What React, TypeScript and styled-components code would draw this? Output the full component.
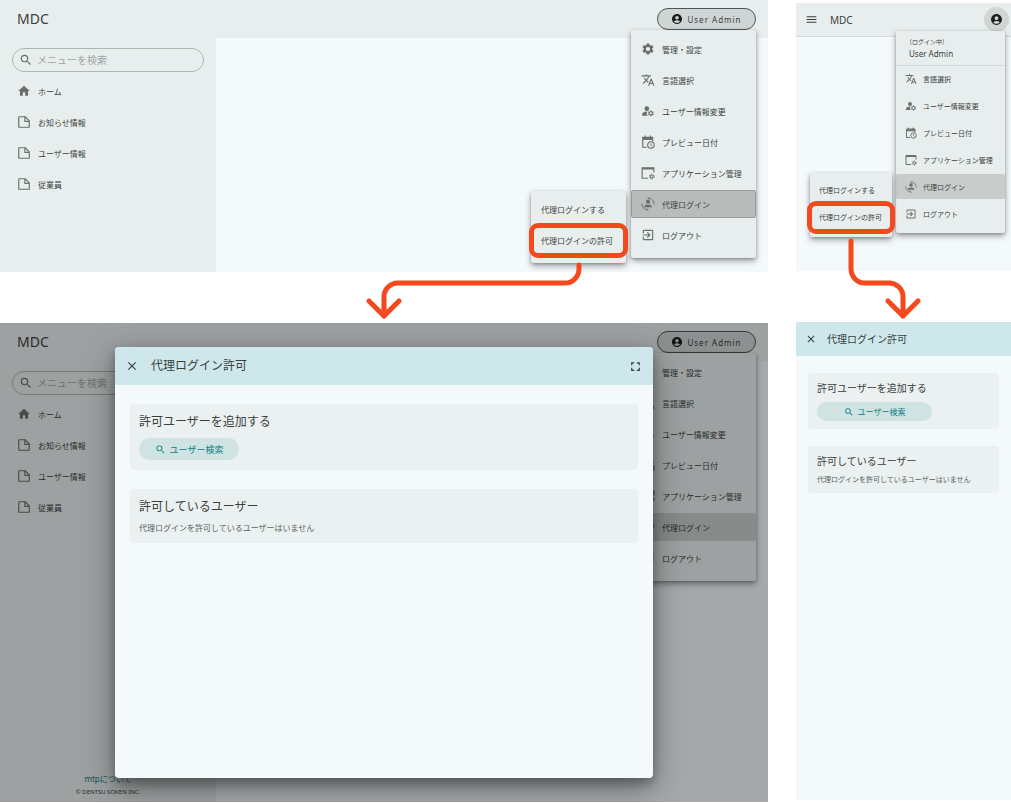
import React from "react";
import styled, { createGlobalStyle, css } from "styled-components";
import {
  MdSearch,
  MdHome,
  MdAccountCircle,
  MdSettings,
  MdTranslate,
  MdManageAccounts,
  MdExitToApp,
  MdMenu,
  MdClose,
  MdFullscreen,
} from "react-icons/md";

const surface = "#e8eeed";
const canvas = "#f4f9fc";
const ink = "#3a3f3e";
const iconInk = "#6a706f";
const accent = "#f4491f";

const GlobalStyle = createGlobalStyle`
  * { box-sizing: border-box; }
  body {
    margin: 0;
    background: #fff;
    color: ${ink};
    font-family: "Noto Sans", "Noto Sans CJK JP", sans-serif;
    font-size: 8px;
  }
  button, input { font: inherit; color: inherit; }
  svg { display: block; flex: none; }
`;

const Page = styled.main`
  display: grid;
  grid-template-columns: minmax(0, 1fr) 215px;
  column-gap: 28px;
  align-items: start;
`;

const Column = styled.div<{ $compact?: boolean }>`
  position: relative;
  display: flex;
  flex-direction: column;
  gap: 51px;
  padding-top: ${(p) => (p.$compact ? 3 : 0)}px;
`;

/* Desktop window */

const Desktop = styled.section<{ $tall?: boolean }>`
  position: relative;
  display: flex;
  flex-direction: column;
  min-height: ${(p) => (p.$tall ? 479 : 272)}px;
  background: ${canvas};
`;

const TopBar = styled.header`
  display: flex;
  align-items: center;
  justify-content: space-between;
  height: 38px;
  padding: 0 12px 0 17px;
  background: ${surface};
`;

const Brand = styled.h1`
  margin: 0;
  font-size: 14px;
  line-height: 20px;
  font-weight: 400;
`;

const UserButton = styled.button`
  display: flex;
  align-items: center;
  justify-content: center;
  gap: 4px;
  width: 99px;
  height: 22px;
  padding: 0;
  border: 1px solid #4f5554;
  border-radius: 11px;
  background: #cfd5d4;
  letter-spacing: 1px;
  svg { color: #1b1f1e; }
`;

const DesktopBody = styled.div`
  flex: 1;
  display: flex;
`;

const Sidebar = styled.aside`
  display: flex;
  flex-direction: column;
  width: 216px;
  padding: 10px 12px 4px;
  background: ${surface};
`;

const SearchField = styled.label`
  display: flex;
  align-items: center;
  gap: 4px;
  height: 24px;
  padding: 0 6px;
  border: 1px solid #aeb5b3;
  border-radius: 12px;
  color: ${iconInk};
`;

const SearchInput = styled.input`
  flex: 1;
  min-width: 0;
  padding: 0;
  border: 0;
  outline: 0;
  background: transparent;
  font-size: 10px;
  line-height: 16px;
  &::placeholder {
    color: #a0a6a5;
    opacity: 1;
  }
`;

const NavList = styled.nav`
  display: flex;
  flex-direction: column;
  gap: 3px;
  padding-top: 5px;
`;

const NavLink = styled.a`
  display: flex;
  align-items: center;
  gap: 7px;
  height: 28px;
  padding-left: 5px;
  color: ${ink};
  text-decoration: none;
  svg { color: ${iconInk}; }
`;

const SideFooter = styled.footer`
  display: flex;
  flex-direction: column;
  align-items: center;
  gap: 1px;
  margin-top: auto;
  font-size: 6px;
  line-height: 12px;
`;

const FooterLink = styled.a`
  color: #0b7a7d;
  font-size: 8px;
  text-decoration: none;
`;

/* Menus */

const floating = css`
  position: absolute;
  z-index: 2;
  border-radius: 2px;
  background: ${surface};
  box-shadow: 0 3px 6px rgba(0, 0, 0, 0.35), 0 1px 3px rgba(0, 0, 0, 0.2);
`;

const UserMenu = styled.div<{ $compact?: boolean }>`
  ${floating}
  top: ${(p) => (p.$compact ? 28 : 30)}px;
  right: ${(p) => (p.$compact ? 6 : 12)}px;
  width: ${(p) => (p.$compact ? 109 : 125)}px;
  padding: ${(p) => (p.$compact ? "0 0 7px" : "5px 0 9px")};
`;

const SubMenu = styled.div<{ $compact?: boolean }>`
  ${floating}
  top: ${(p) => (p.$compact ? 170 : 191)}px;
  right: ${(p) => (p.$compact ? 119 : 142)}px;
  width: ${(p) => (p.$compact ? 82 : 95)}px;
  padding: ${(p) => (p.$compact ? "4px 0 8px" : "4px 0 9px")};
`;

const MenuItems = styled.div<{ $compact?: boolean }>`
  display: flex;
  flex-direction: column;
  gap: ${(p) => (p.$compact ? 2 : 3)}px;
`;

const MenuItem = styled.button<{
  $compact?: boolean;
  $selected?: boolean;
  $focused?: boolean;
}>`
  position: relative;
  display: flex;
  align-items: center;
  gap: ${(p) => (p.$compact ? 6 : 7)}px;
  height: ${(p) => (p.$compact ? 25 : 28)}px;
  padding: 0 0 0 ${(p) => (p.$compact ? 8 : 9)}px;
  border: 1px solid ${(p) => (p.$focused ? "#989d9c" : "transparent")};
  border-radius: 2px;
  background: ${(p) =>
    p.$focused ? "#b8bdbc" : p.$selected ? "#c8cdcc" : "transparent"};
  font-size: ${(p) => (p.$compact ? 7 : 8)}px;
  text-align: left;
  white-space: nowrap;
  svg { color: ${iconInk}; }
`;

const Highlight = styled.span<{ $compact?: boolean }>`
  position: absolute;
  inset: ${(p) => (p.$compact ? "-4px -4px -6px -4px" : "-4px -3px -5px -3px")};
  border: 5px solid ${accent};
  border-radius: 9px;
`;

const Account = styled.div`
  display: flex;
  flex-direction: column;
  height: 35px;
  padding: 6px 13px 0;
  border-bottom: 1px solid #d3d9d8;
  font-size: 8px;
  line-height: 12px;
`;

const AccountNote = styled.span`
  margin-left: -3px;
  font-size: 6px;
  line-height: 11px;
`;

/* Dialog */

const Scrim = styled.div`
  position: absolute;
  inset: 0;
  z-index: 3;
  display: flex;
  padding: 24px 115px;
  background: rgba(0, 0, 0, 0.32);
`;

const Dialog = styled.div`
  flex: 1;
  display: flex;
  flex-direction: column;
  overflow: hidden;
  border-radius: 4px;
  background: ${canvas};
  box-shadow: 0 6px 12px rgba(0, 0, 0, 0.3), 0 10px 34px rgba(0, 0, 0, 0.35);
`;

const DialogBar = styled.header<{ $compact?: boolean }>`
  display: flex;
  align-items: center;
  gap: ${(p) => (p.$compact ? 10 : 12)}px;
  height: ${(p) => (p.$compact ? 34 : 38)}px;
  padding: 0 ${(p) => (p.$compact ? 9 : 10)}px;
  background: #cde7ea;
`;

const DialogTitle = styled.h2<{ $compact?: boolean }>`
  flex: 1;
  margin: 0;
  font-size: ${(p) => (p.$compact ? 10 : 12)}px;
  line-height: 18px;
  font-weight: 400;
`;

const IconButton = styled.button`
  display: flex;
  padding: 0;
  border: 0;
  background: transparent;
`;

const DialogBody = styled.div<{ $compact?: boolean }>`
  display: flex;
  flex-direction: column;
  gap: ${(p) => (p.$compact ? 17 : 19)}px;
  padding: ${(p) => (p.$compact ? "17px 12px" : "19px 15px")};
`;

const Card = styled.section<{ $compact?: boolean }>`
  display: flex;
  flex-direction: column;
  align-items: flex-start;
  gap: ${(p) => (p.$compact ? 6 : 8)}px;
  padding: ${(p) => (p.$compact ? "8px 9px" : "10px 9px")};
  border-radius: 4px;
  background: #ebf0f0;
`;

const CardTitle = styled.h3<{ $compact?: boolean }>`
  margin: 0;
  font-size: ${(p) => (p.$compact ? 10 : 12)}px;
  line-height: ${(p) => (p.$compact ? 15 : 16)}px;
  font-weight: 400;
`;

const CardText = styled.p<{ $compact?: boolean }>`
  margin: 0;
  color: #566361;
  font-size: ${(p) => (p.$compact ? 7 : 8)}px;
  line-height: 10px;
`;

const FindButton = styled.button<{ $compact?: boolean }>`
  display: flex;
  align-items: center;
  justify-content: center;
  gap: 4px;
  width: ${(p) => (p.$compact ? 115 : 100)}px;
  height: ${(p) => (p.$compact ? 19 : 22)}px;
  padding: 0;
  border: 0;
  border-radius: 11px;
  background: #cee3e2;
  color: #0b7f80;
  font-size: ${(p) => (p.$compact ? 8 : 9)}px;
`;

/* Phone window */

const Phone = styled.section<{ $tall?: boolean }>`
  position: relative;
  min-height: ${(p) => (p.$tall ? 478 : 268)}px;
  background: ${canvas};
`;

const PhoneBar = styled.header`
  display: flex;
  align-items: center;
  gap: 12px;
  height: 34px;
  padding: 0 2px 0 9px;
  border-bottom: 1px solid #d5dbda;
  background: ${surface};
`;

const PhoneBrand = styled.h1`
  flex: 1;
  margin: 0;
  font-size: 10px;
  line-height: 16px;
  font-weight: 400;
`;

const Avatar = styled.button`
  display: flex;
  align-items: center;
  justify-content: center;
  width: 25px;
  height: 25px;
  padding: 0;
  border: 0;
  border-radius: 50%;
  background: #d0d6d5;
  color: #1b1f1e;
`;

const Arrow = styled.svg<{ $top: number; $right: number }>`
  position: absolute;
  z-index: 4;
  top: ${(p) => p.$top}px;
  right: ${(p) => p.$right}px;
  fill: none;
  stroke: ${accent};
  stroke-width: 5;
  stroke-linecap: round;
  stroke-linejoin: round;
`;

type IconProps = { size: number };

const SmallGear = () => (
  <>
    <circle cx="18.5" cy="18" r="2.6" fill="none" stroke="currentColor" strokeWidth="1.8" />
    <circle
      cx="18.5"
      cy="18"
      r="4.2"
      fill="none"
      stroke="currentColor"
      strokeWidth="1.6"
      strokeDasharray="2.2 2.2"
    />
  </>
);

const PageIcon = ({ size }: IconProps) => (
  <svg width={size} height={size} viewBox="0 0 24 24" fill="none" stroke="currentColor" strokeWidth="2" strokeLinejoin="round">
    <path d="M4 3h10l7 7v11H4a1 1 0 0 1-1-1V4a1 1 0 0 1 1-1z" />
    <path d="M13.500 3v8H21" />
  </svg>
);

const DateIcon = ({ size }: IconProps) => (
  <svg width={size} height={size} viewBox="0 0 24 24" fill="none" stroke="currentColor" strokeWidth="2">
    <path d="M10 21H3V4h17v7" />
    <path d="M3 6.500h17" strokeWidth="4" />
    <path d="M7 1v4M16 1v4" />
    <circle cx="17" cy="17" r="5.500" />
    <path d="M17 14v3.500l2 1.500" strokeWidth="1.600" />
  </svg>
);

const AppIcon = ({ size }: IconProps) => (
  <svg width={size} height={size} viewBox="0 0 24 24" fill="none" stroke="currentColor" strokeWidth="2">
    <path d="M12 21H2V3h20v8" />
    <path d="M2 4.500h20" strokeWidth="3" />
    <SmallGear />
  </svg>
);

const ProxyIcon = ({ size }: IconProps) => (
  <svg width={size} height={size} viewBox="0 0 24 24" fill="none" stroke="currentColor" strokeWidth="1.6">
    <circle cx="12" cy="8" r="3.500" fill="currentColor" stroke="none" />
    <path d="M5 17.500c0-3 4-4.500 7-4.500s7 1.500 7 4.500z" fill="currentColor" stroke="none" />
    <path d="M1.500 11c0 6.500 4.500 11 11 11.500l-3-3" />
    <path d="M22.500 13c0-6.500-4.500-11-11-11.500l3 3" />
  </svg>
);

const menuEntries = [
  { label: "管理・設定", Icon: MdSettings, desktopOnly: true },
  { label: "言語選択", Icon: MdTranslate },
  { label: "ユーザー情報変更", Icon: MdManageAccounts },
  { label: "プレビュー日付", Icon: DateIcon },
  { label: "アプリケーション管理", Icon: AppIcon },
  { label: "代理ログイン", Icon: ProxyIcon, selected: true },
  { label: "ログアウト", Icon: MdExitToApp },
];

const navEntries = [
  { label: "ホーム", Icon: MdHome },
  { label: "お知らせ情報", Icon: PageIcon },
  { label: "ユーザー情報", Icon: PageIcon },
  { label: "従業員", Icon: PageIcon },
];

function AccountMenu({ compact, focused }: { compact?: boolean; focused?: boolean }) {
  return (
    <UserMenu $compact={compact}>
      {compact && (
        <Account>
          <AccountNote>（ログイン中）</AccountNote>
          User Admin
        </Account>
      )}
      <MenuItems $compact={compact}>
        {menuEntries
          .filter((e) => !(compact && e.desktopOnly))
          .map(({ label, Icon, selected }) => (
            <MenuItem
              key={label}
              type="button"
              $compact={compact}
              $selected={selected}
              $focused={selected && focused}
            >
              <Icon size={compact ? 12 : 14} />
              {label}
            </MenuItem>
          ))}
      </MenuItems>
    </UserMenu>
  );
}

function ProxyMenu({ compact }: { compact?: boolean }) {
  return (
    <SubMenu $compact={compact}>
      <MenuItems $compact={compact}>
        <MenuItem type="button" $compact={compact}>代理ログインする</MenuItem>
        <MenuItem type="button" $compact={compact}>
          代理ログインの許可
          <Highlight $compact={compact} />
        </MenuItem>
      </MenuItems>
    </SubMenu>
  );
}

function DesktopWindow({
  tall,
  footer,
  focused,
  children,
}: {
  tall?: boolean;
  footer?: boolean;
  focused?: boolean;
  children?: React.ReactNode;
}) {
  return (
    <Desktop $tall={tall}>
      <TopBar>
        <Brand>MDC</Brand>
        <UserButton type="button">
          <MdAccountCircle size={12} />
          User Admin
        </UserButton>
      </TopBar>
      <DesktopBody>
        <Sidebar>
          <SearchField>
            <MdSearch size={14} />
            <SearchInput type="text" aria-label="メニューを検索" placeholder="メニューを検索" />
          </SearchField>
          <NavList>
            {navEntries.map(({ label, Icon }) => (
              <NavLink key={label} href="#">
                <Icon size={14} />
                {label}
              </NavLink>
            ))}
          </NavList>
          {footer && (
            <SideFooter>
              <FooterLink href="#">mtpについて</FooterLink>
              <span>© DENTSU SOKEN INC.</span>
            </SideFooter>
          )}
        </Sidebar>
      </DesktopBody>
      <AccountMenu focused={focused} />
      {children}
    </Desktop>
  );
}

function PermissionContent({ compact }: { compact?: boolean }) {
  return (
    <>
      <DialogBar $compact={compact}>
        <IconButton type="button" aria-label="閉じる">
          <MdClose size={compact ? 12 : 14} />
        </IconButton>
        <DialogTitle $compact={compact}>代理ログイン許可</DialogTitle>
        {!compact && (
          <IconButton type="button" aria-label="全画面表示">
            <MdFullscreen size={15} />
          </IconButton>
        )}
      </DialogBar>
      <DialogBody $compact={compact}>
        <Card $compact={compact}>
          <CardTitle $compact={compact}>許可ユーザーを追加する</CardTitle>
          <FindButton type="button" $compact={compact}>
            <MdSearch size={compact ? 10 : 11} />
            ユーザー検索
          </FindButton>
        </Card>
        <Card $compact={compact}>
          <CardTitle $compact={compact}>許可しているユーザー</CardTitle>
          <CardText $compact={compact}>代理ログインを許可しているユーザーはいません</CardText>
        </Card>
      </DialogBody>
    </>
  );
}

export default function App() {
  return (
    <>
      <GlobalStyle />
      <Page>
        <Column>
          <DesktopWindow focused>
            <ProxyMenu />
          </DesktopWindow>
          <DesktopWindow tall footer>
            <Scrim>
              <Dialog role="dialog" aria-label="代理ログイン許可">
                <PermissionContent />
              </Dialog>
            </Scrim>
          </DesktopWindow>
          <Arrow $top={260} $right={184} width="220" height="62" viewBox="0 0 220 62">
            <path d="M215 5v4a14 14 0 0 1-14 14H34a14 14 0 0 0-14 14v19M5 41l15 15 15-15" />
          </Arrow>
        </Column>
        <Column $compact>
          <Phone>
            <PhoneBar>
              <IconButton type="button" aria-label="メニュー">
                <MdMenu size={13} />
              </IconButton>
              <PhoneBrand>MDC</PhoneBrand>
              <Avatar type="button" aria-label="User Admin">
                <MdAccountCircle size={13} />
              </Avatar>
            </PhoneBar>
            <AccountMenu compact />
            <ProxyMenu compact />
          </Phone>
          <Phone $tall>
            <PermissionContent compact />
          </Phone>
          <Arrow $top={236} $right={87} width="78" height="86" viewBox="0 0 78 86">
            <path d="M5 5v28a14 14 0 0 0 14 14h24a14 14 0 0 1 14 14v19M42 65l15 15 15-15" />
          </Arrow>
        </Column>
      </Page>
    </>
  );
}
